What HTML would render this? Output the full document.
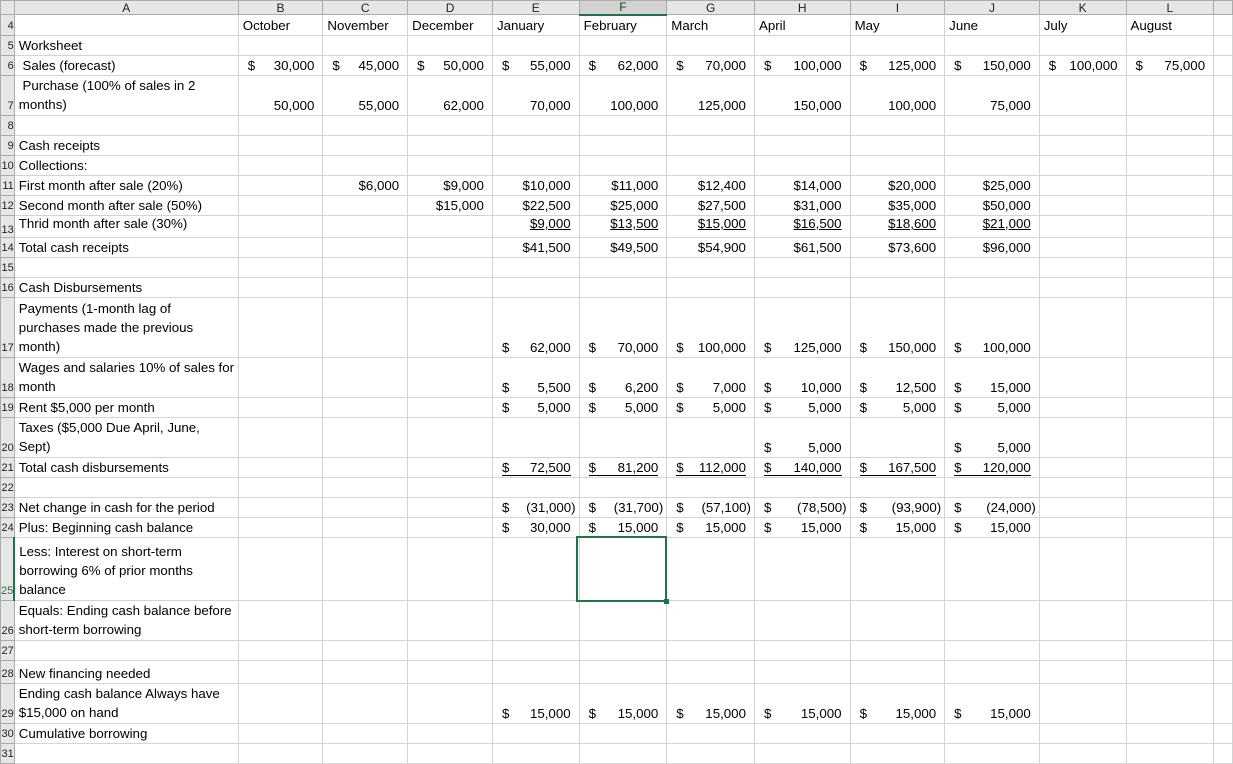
<!DOCTYPE html>
<html><head><meta charset="utf-8"><style>
html,body{margin:0;padding:0;background:#fff;width:1233px;height:761px;overflow:hidden}
table{border-collapse:collapse;table-layout:fixed;font-family:"Liberation Sans",sans-serif;font-size:13.3px;color:#000;position:absolute;left:0;top:0}
td{border:1px solid #d4d4d4;padding:0 3px 1px 3px;vertical-align:bottom;white-space:nowrap;overflow:hidden;line-height:17px;box-sizing:border-box}
td.m{line-height:19px}
td.h{background:#e6e6e6;border-color:#ababab;text-align:center;vertical-align:middle;line-height:12px;font-size:12px;color:#222;padding:0}
td.hs{background:#d2d2d2;border-bottom:2px solid #217346;color:#0e4b25}
td.n{background:#e6e6e6;border-color:#ababab;padding:0;text-align:right;font-size:11px;color:#222;overflow:hidden;direction:rtl}
td.ns{border-right:2px solid #217346;color:#217346}
td.a{text-align:left;padding-left:4px}
td.r{text-align:right;padding-right:8px}
td.c{position:relative;text-align:right;padding-right:8px;padding-left:9px}
td.c i{font-style:normal;position:absolute;left:9px;bottom:1px}
td.neg{padding-right:3px}
u{text-decoration:underline}
td.ul div{border-bottom:1px solid #000;line-height:15px;position:relative;text-align:right}
td.ul div i{left:0;bottom:0}
.sel{position:absolute;left:576px;top:536px;width:87px;height:62px;border:2px solid #217346}
.sel:after{content:"";position:absolute;right:-4px;bottom:-4px;width:5px;height:5px;background:#217346}
</style></head><body>
<table>
<colgroup><col style="width:11px"><col style="width:224px"><col style="width:85px"><col style="width:85px"><col style="width:85px"><col style="width:87px"><col style="width:88px"><col style="width:88px"><col style="width:96px"><col style="width:95px"><col style="width:95px"><col style="width:87px"><col style="width:88px"><col style="width:19px"></colgroup>
<tr style="height:14px"><td class="h"></td><td class="h">A</td><td class="h">B</td><td class="h">C</td><td class="h">D</td><td class="h">E</td><td class="h hs">F</td><td class="h">G</td><td class="h">H</td><td class="h">I</td><td class="h">J</td><td class="h">K</td><td class="h">L</td><td class="h"></td></tr>
<tr style="height:21px"><td class="n">4</td><td></td><td class="a">October</td><td class="a">November</td><td class="a">December</td><td class="a">January</td><td class="a">February</td><td class="a">March</td><td class="a">April</td><td class="a">May</td><td class="a">June</td><td class="a">July</td><td class="a">August</td><td></td></tr>
<tr style="height:20px"><td class="n">5</td><td class="a">Worksheet</td><td></td><td></td><td></td><td></td><td></td><td></td><td></td><td></td><td></td><td></td><td></td><td></td></tr>
<tr style="height:20px"><td class="n">6</td><td class="a">&nbsp;Sales (forecast)</td><td class="c"><i>$</i>30,000</td><td class="c"><i>$</i>45,000</td><td class="c"><i>$</i>50,000</td><td class="c"><i>$</i>55,000</td><td class="c"><i>$</i>62,000</td><td class="c"><i>$</i>70,000</td><td class="c"><i>$</i>100,000</td><td class="c"><i>$</i>125,000</td><td class="c"><i>$</i>150,000</td><td class="c"><i>$</i>100,000</td><td class="c"><i>$</i>75,000</td><td></td></tr>
<tr style="height:39px"><td class="n">7</td><td class="a m">&nbsp;Purchase (100% of sales in 2<br>months)</td><td class="r">50,000</td><td class="r">55,000</td><td class="r">62,000</td><td class="r">70,000</td><td class="r">100,000</td><td class="r">125,000</td><td class="r">150,000</td><td class="r">100,000</td><td class="r">75,000</td><td></td><td></td><td></td></tr>
<tr style="height:20px"><td class="n">8</td><td></td><td></td><td></td><td></td><td></td><td></td><td></td><td></td><td></td><td></td><td></td><td></td><td></td></tr>
<tr style="height:20px"><td class="n">9</td><td class="a">Cash receipts</td><td></td><td></td><td></td><td></td><td></td><td></td><td></td><td></td><td></td><td></td><td></td><td></td></tr>
<tr style="height:20px"><td class="n">10</td><td class="a">Collections:</td><td></td><td></td><td></td><td></td><td></td><td></td><td></td><td></td><td></td><td></td><td></td><td></td></tr>
<tr style="height:20px"><td class="n">11</td><td class="a">First month after sale (20%)</td><td></td><td class="r">$6,000</td><td class="r">$9,000</td><td class="r">$10,000</td><td class="r">$11,000</td><td class="r">$12,400</td><td class="r">$14,000</td><td class="r">$20,000</td><td class="r">$25,000</td><td></td><td></td><td></td></tr>
<tr style="height:20px"><td class="n">12</td><td class="a">Second month after sale (50%)</td><td></td><td></td><td class="r">$15,000</td><td class="r">$22,500</td><td class="r">$25,000</td><td class="r">$27,500</td><td class="r">$31,000</td><td class="r">$35,000</td><td class="r">$50,000</td><td></td><td></td><td></td></tr>
<tr style="height:22px"><td class="n" style="vertical-align:bottom;line-height:14px">13</td><td class="a" style="vertical-align:top;line-height:15px">Thrid month after sale (30%)</td><td></td><td></td><td></td><td class="r" style="vertical-align:top;line-height:15px"><u>$9,000</u></td><td class="r" style="vertical-align:top;line-height:15px"><u>$13,500</u></td><td class="r" style="vertical-align:top;line-height:15px"><u>$15,000</u></td><td class="r" style="vertical-align:top;line-height:15px"><u>$16,500</u></td><td class="r" style="vertical-align:top;line-height:15px"><u>$18,600</u></td><td class="r" style="vertical-align:top;line-height:15px"><u>$21,000</u></td><td></td><td></td><td></td></tr>
<tr style="height:20px"><td class="n">14</td><td class="a">Total cash receipts</td><td></td><td></td><td></td><td class="r">$41,500</td><td class="r">$49,500</td><td class="r">$54,900</td><td class="r">$61,500</td><td class="r">$73,600</td><td class="r">$96,000</td><td></td><td></td><td></td></tr>
<tr style="height:20px"><td class="n">15</td><td></td><td></td><td></td><td></td><td></td><td></td><td></td><td></td><td></td><td></td><td></td><td></td><td></td></tr>
<tr style="height:20px"><td class="n">16</td><td class="a">Cash Disbursements</td><td></td><td></td><td></td><td></td><td></td><td></td><td></td><td></td><td></td><td></td><td></td><td></td></tr>
<tr style="height:60px"><td class="n">17</td><td class="a m">Payments (1-month lag of<br>purchases made the previous<br>month)</td><td></td><td></td><td></td><td class="c"><i>$</i>62,000</td><td class="c"><i>$</i>70,000</td><td class="c"><i>$</i>100,000</td><td class="c"><i>$</i>125,000</td><td class="c"><i>$</i>150,000</td><td class="c"><i>$</i>100,000</td><td></td><td></td><td></td></tr>
<tr style="height:40px"><td class="n">18</td><td class="a m">Wages and salaries 10% of sales for<br>month</td><td></td><td></td><td></td><td class="c"><i>$</i>5,500</td><td class="c"><i>$</i>6,200</td><td class="c"><i>$</i>7,000</td><td class="c"><i>$</i>10,000</td><td class="c"><i>$</i>12,500</td><td class="c"><i>$</i>15,000</td><td></td><td></td><td></td></tr>
<tr style="height:20px"><td class="n">19</td><td class="a">Rent $5,000 per month</td><td></td><td></td><td></td><td class="c"><i>$</i>5,000</td><td class="c"><i>$</i>5,000</td><td class="c"><i>$</i>5,000</td><td class="c"><i>$</i>5,000</td><td class="c"><i>$</i>5,000</td><td class="c"><i>$</i>5,000</td><td></td><td></td><td></td></tr>
<tr style="height:40px"><td class="n">20</td><td class="a m">Taxes ($5,000 Due April, June,<br>Sept)</td><td></td><td></td><td></td><td></td><td></td><td></td><td class="c"><i>$</i>5,000</td><td></td><td class="c"><i>$</i>5,000</td><td></td><td></td><td></td></tr>
<tr style="height:20px"><td class="n">21</td><td class="a">Total cash disbursements</td><td></td><td></td><td></td><td class="c ul"><div><i>$</i>72,500</div></td><td class="c ul"><div><i>$</i>81,200</div></td><td class="c ul"><div><i>$</i>112,000</div></td><td class="c ul"><div><i>$</i>140,000</div></td><td class="c ul"><div><i>$</i>167,500</div></td><td class="c ul"><div><i>$</i>120,000</div></td><td></td><td></td><td></td></tr>
<tr style="height:20px"><td class="n">22</td><td></td><td></td><td></td><td></td><td></td><td></td><td></td><td></td><td></td><td></td><td></td><td></td><td></td></tr>
<tr style="height:20px"><td class="n">23</td><td class="a">Net change in cash for the period</td><td></td><td></td><td></td><td class="c neg"><i>$</i>(31,000)</td><td class="c neg"><i>$</i>(31,700)</td><td class="c neg"><i>$</i>(57,100)</td><td class="c neg"><i>$</i>(78,500)</td><td class="c neg"><i>$</i>(93,900)</td><td class="c neg"><i>$</i>(24,000)</td><td></td><td></td><td></td></tr>
<tr style="height:20px"><td class="n">24</td><td class="a">Plus: Beginning cash balance</td><td></td><td></td><td></td><td class="c"><i>$</i>30,000</td><td class="c"><i>$</i>15,000</td><td class="c"><i>$</i>15,000</td><td class="c"><i>$</i>15,000</td><td class="c"><i>$</i>15,000</td><td class="c"><i>$</i>15,000</td><td></td><td></td><td></td></tr>
<tr style="height:63px"><td class="n ns">25</td><td class="a m">Less: Interest on short-term<br>borrowing 6% of prior months<br>balance</td><td></td><td></td><td></td><td></td><td></td><td></td><td></td><td></td><td></td><td></td><td></td><td></td></tr>
<tr style="height:40px"><td class="n">26</td><td class="a m">Equals: Ending cash balance before<br>short-term borrowing</td><td></td><td></td><td></td><td></td><td></td><td></td><td></td><td></td><td></td><td></td><td></td><td></td></tr>
<tr style="height:20px"><td class="n">27</td><td></td><td></td><td></td><td></td><td></td><td></td><td></td><td></td><td></td><td></td><td></td><td></td><td></td></tr>
<tr style="height:23px"><td class="n">28</td><td class="a">New financing needed</td><td></td><td></td><td></td><td></td><td></td><td></td><td></td><td></td><td></td><td></td><td></td><td></td></tr>
<tr style="height:40px"><td class="n">29</td><td class="a m">Ending cash balance Always have<br>$15,000 on hand</td><td></td><td></td><td></td><td class="c"><i>$</i>15,000</td><td class="c"><i>$</i>15,000</td><td class="c"><i>$</i>15,000</td><td class="c"><i>$</i>15,000</td><td class="c"><i>$</i>15,000</td><td class="c"><i>$</i>15,000</td><td></td><td></td><td></td></tr>
<tr style="height:20px"><td class="n">30</td><td class="a">Cumulative borrowing</td><td></td><td></td><td></td><td></td><td></td><td></td><td></td><td></td><td></td><td></td><td></td><td></td></tr>
<tr style="height:20px"><td class="n">31</td><td></td><td></td><td></td><td></td><td></td><td></td><td></td><td></td><td></td><td></td><td></td><td></td><td></td></tr>
</table>
<div class="sel"></div>
</body></html>
